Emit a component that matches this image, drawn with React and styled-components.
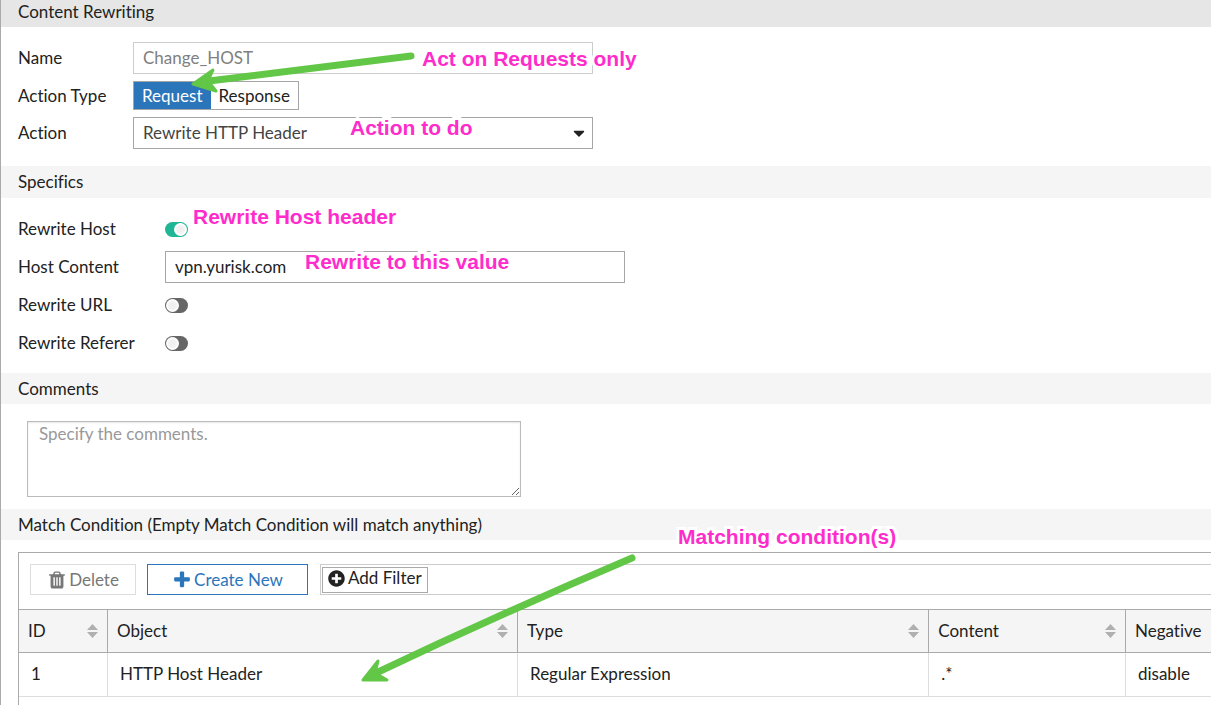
import React, { useState } from 'react';
import styled, { createGlobalStyle } from 'styled-components';
import { FaCaretDown, FaPlusCircle } from 'react-icons/fa';

const GlobalStyle = createGlobalStyle`
  *, *::before, *::after {
    box-sizing: border-box;
  }

  body {
    margin: 0;
    background: #fff;
    color: #222;
    font-family: Lato, "Liberation Sans", sans-serif;
    font-size: 17px;
    font-variant-ligatures: none;
    line-height: 24px;
  }

  button, input, select, textarea {
    font: inherit;
    color: inherit;
    border-radius: 0;
  }
`;

const Page = styled.main`
  position: relative;
  display: flex;
  flex-direction: column;
  min-height: 100vh;
  border-left: 1px solid #aaa;
  overflow: hidden;
`;

const PageTitle = styled.h1`
  margin: 0;
  padding: 0 17px 3px;
  background: #e6e6e6;
  font-size: 17px;
  font-weight: 400;
`;

const SectionTitle = styled.h2`
  display: flex;
  align-items: center;
  margin: 0;
  padding: 0 17px;
  height: ${(props) => props.$height || 31}px;
  background: #f5f5f5;
  font-size: 17px;
  font-weight: 400;
`;

const GeneralForm = styled.div`
  display: flex;
  flex-direction: column;
  gap: 7px;
  padding: 15px 17px 17px;
`;

const SpecificsForm = styled.div`
  display: flex;
  flex-direction: column;
  padding: 12px 17px 11px;
`;

const Row = styled.div`
  display: flex;
  align-items: center;
  min-height: ${(props) => props.$height || 0}px;
`;

const Label = styled.label`
  flex: none;
  width: ${(props) => (props.$wide ? 147 : 115)}px;
`;

const Field = styled.div`
  position: relative;
  flex: 0 1 460px;
`;

const TextInput = styled.input`
  display: block;
  width: 100%;
  height: 32px;
  padding: 0 9px 2px;
  border: 1px solid #a6a6a6;
  background: #fff;
  outline: none;

  &:disabled {
    border-color: #ccc;
    color: #808080;
  }
`;

const Select = styled.select`
  display: block;
  width: 100%;
  height: 32px;
  padding: 0 9px;
  border: 1px solid #a6a6a6;
  background: #fff;
  color: #444;
  appearance: none;
  outline: none;
`;

const SelectArrow = styled(FaCaretDown)`
  position: absolute;
  top: 7px;
  right: 5px;
  color: #222;
  font-size: 18px;
  pointer-events: none;
`;

const Segmented = styled.div`
  display: flex;
  border: 1px solid #a6a6a6;
`;

const Segment = styled.button`
  height: 27px;
  padding: 0 8px;
  border: 0;
  background: ${(props) => (props.$active ? '#2b75bb' : '#fff')};
  color: ${(props) => (props.$active ? '#fff' : '#222')};
  cursor: pointer;
`;

const Toggle = styled.input`
  appearance: none;
  display: block;
  width: 23px;
  height: 15px;
  margin: 0;
  border-radius: 8px;
  background: #666;
  cursor: pointer;

  &::before {
    content: '';
    display: block;
    width: 13px;
    height: 13px;
    margin: 1px;
    border-radius: 50%;
    background: radial-gradient(circle, #eee 0, #f2f2f2 40%, #fff 60%);
  }

  &:checked {
    background: #1fb695;
  }

  &:checked::before {
    margin-left: 9px;
  }
`;

const CommentsForm = styled.div`
  padding: 17px 26px 12px;
`;

const Comments = styled.textarea`
  display: block;
  width: 494px;
  max-width: 100%;
  height: 76px;
  padding: 0 11px;
  border: 1px solid #bbb;
  box-shadow: inset 0 1px 2px #e6e6e6;
  outline: none;

  &::placeholder {
    color: #999;
  }
`;

const Panel = styled.section`
  flex: 1;
  margin: 12px 0 0 17px;
  border: solid #aaa;
  border-width: 1px 0 0 1px;
`;

const Toolbar = styled.div`
  display: flex;
  padding: 11px 0 14px 11px;
`;

const ToolButton = styled.button`
  display: flex;
  align-items: center;
  justify-content: center;
  gap: 2px;
  width: ${(props) => props.$width}px;
  height: 31px;
  margin-right: ${(props) => props.$gap}px;
  padding: 0;
  border: 1px solid ${(props) => (props.$primary ? '#2b75bb' : '#ddd')};
  background: #fff;
  color: ${(props) => (props.$primary ? '#2b75bb' : '#777')};
`;

const FilterBar = styled.div`
  flex: 1;
  height: 31px;
  padding: 2px 1px;
  border: 1px solid #ccc;
  border-right: 0;
`;

const FilterButton = styled.button`
  display: flex;
  align-items: center;
  gap: 3px;
  height: 26px;
  padding: 0 5px 4px;
  border: 1px solid #aaa;
  background: #fff;
`;

const Table = styled.table`
  width: 100%;
  border-spacing: 0;
  table-layout: fixed;
`;

const HeadCell = styled.th`
  width: ${(props) => props.$width};
  height: 44px;
  padding: 0 9px;
  border: solid #aaa;
  border-width: 1px 0 1px 1px;
  background: #f5f5f5;
  font-weight: 400;
  text-align: left;

  &:first-child {
    border-left: 0;
  }
`;

const HeadContent = styled.div`
  display: flex;
  align-items: center;
  justify-content: space-between;
`;

const Cell = styled.td`
  height: 44px;
  padding: 0 12px 2px;
  border: solid #ddd;
  border-width: 0 0 1px 1px;

  &:first-child {
    border-left: 0;
  }
`;

const Note = styled.span`
  position: absolute;
  left: ${(props) => props.$left}px;
  top: ${(props) => props.$top}px;
  color: #ff2ccb;
  font-family: "Liberation Sans", Arial, sans-serif;
  font-size: 21px;
  font-weight: 700;
  white-space: nowrap;
  -webkit-text-stroke: 6px #fff;
  paint-order: stroke fill;
  stroke-linejoin: round;
  pointer-events: none;
  z-index: 2;
`;

const Arrows = styled.svg`
  position: absolute;
  top: 0;
  left: -1px;
  pointer-events: none;
  z-index: 1;
`;

const TrashIcon = () => (
  <svg width="20" height="20" viewBox="0 0 1792 1792" fill="currentColor" aria-hidden="true">
    <path d="M704 1376v-704q0-14-9-23t-23-9h-64q-14 0-23 9t-9 23v704q0 14 9 23t23 9h64q14 0 23-9t9-23zm256 0v-704q0-14-9-23t-23-9h-64q-14 0-23 9t-9 23v704q0 14 9 23t23 9h64q14 0 23-9t9-23zm256 0v-704q0-14-9-23t-23-9h-64q-14 0-23 9t-9 23v704q0 14 9 23t23 9h64q14 0 23-9t9-23zm-544-992h448l-48-117q-7-9-17-11h-317q-10 2-17 11zm928 32v64q0 14-9 23t-23 9h-96v948q0 83-47 143.5t-113 60.5h-832q-66 0-113-58.5t-47-141.5v-952h-96q-14 0-23-9t-9-23v-64q0-14 9-23t23-9h309l70-167q15-37 54-63t79-26h320q40 0 79 26t54 63l70 167h309q14 0 23 9t9 23z" />
  </svg>
);

const PlusIcon = () => (
  <svg width="20" height="20" viewBox="0 0 1792 1792" fill="currentColor" aria-hidden="true">
    <path d="M1600 736v192q0 40-28 68t-68 28h-416v416q0 40-28 68t-68 28h-192q-40 0-68-28t-28-68v-416h-416q-40 0-68-28t-28-68v-192q0-40 28-68t68-28h416v-416q0-40 28-68t68-28h192q40 0 68 28t28 68v416h416q40 0 68 28t28 68z" />
  </svg>
);

const SortIcon = () => (
  <svg width="11" height="14" viewBox="0 0 11 14" fill="#b0b0b0" aria-hidden="true">
    <path d="M5.5 0L11 6H0zM0 8h11l-5.5 6z" />
  </svg>
);

const columns = [
  { name: 'ID', width: '88px', sortable: true },
  { name: 'Object', width: '34.4%', sortable: true },
  { name: 'Type', width: '34.5%', sortable: true },
  { name: 'Content', width: '16.5%', sortable: true },
  { name: 'Negative', width: 'auto', sortable: false },
];

const conditions = [['1', 'HTTP Host Header', 'Regular Expression', '.*', 'disable']];

const App = () => {
  const [actionType, setActionType] = useState('Request');

  return (
    <>
      <GlobalStyle />
      <Page>
        <PageTitle>Content Rewriting</PageTitle>
        <GeneralForm>
          <Row>
            <Label htmlFor="name">Name</Label>
            <Field>
              <TextInput id="name" defaultValue="Change_HOST" disabled />
              <Note $left={289} $top={5}>Act on Requests only</Note>
            </Field>
          </Row>
          <Row>
            <Label as="span" id="action-type">Action Type</Label>
            <Segmented role="group" aria-labelledby="action-type">
              {['Request', 'Response'].map((type) => (
                <Segment
                  key={type}
                  type="button"
                  $active={actionType === type}
                  aria-pressed={actionType === type}
                  onClick={() => setActionType(type)}
                >
                  {type}
                </Segment>
              ))}
            </Segmented>
          </Row>
          <Row>
            <Label htmlFor="action">Action</Label>
            <Field>
              <Select id="action">
                <option>Rewrite HTTP Header</option>
              </Select>
              <SelectArrow />
              <Note $left={217} $top={-1}>Action to do</Note>
            </Field>
          </Row>
        </GeneralForm>

        <SectionTitle $height={32}>Specifics</SectionTitle>
        <SpecificsForm>
          <Row $height={38}>
            <Label $wide htmlFor="rewrite-host">Rewrite Host</Label>
            <Field>
              <Toggle type="checkbox" id="rewrite-host" defaultChecked />
              <Note $left={28} $top={-17}>Rewrite Host header</Note>
            </Field>
          </Row>
          <Row $height={38}>
            <Label $wide htmlFor="host-content">Host Content</Label>
            <Field>
              <TextInput id="host-content" defaultValue="vpn.yurisk.com" />
              <Note $left={140} $top={-1}>Rewrite to this value</Note>
            </Field>
          </Row>
          <Row $height={38}>
            <Label $wide htmlFor="rewrite-url">Rewrite URL</Label>
            <Toggle type="checkbox" id="rewrite-url" />
          </Row>
          <Row $height={38}>
            <Label $wide htmlFor="rewrite-referer">Rewrite Referer</Label>
            <Toggle type="checkbox" id="rewrite-referer" />
          </Row>
        </SpecificsForm>

        <SectionTitle>Comments</SectionTitle>
        <CommentsForm>
          <Comments aria-label="Comments" placeholder="Specify the comments." />
        </CommentsForm>

        <SectionTitle>Match Condition (Empty Match Condition will match anything)</SectionTitle>
        <Panel>
          <Toolbar>
            <ToolButton type="button" $width={106} $gap={11}>
              <TrashIcon />
              Delete
            </ToolButton>
            <ToolButton type="button" $primary $width={161} $gap={12}>
              <PlusIcon />
              Create New
            </ToolButton>
            <FilterBar>
              <FilterButton type="button">
                <FaPlusCircle size={17} />
                Add Filter
              </FilterButton>
            </FilterBar>
          </Toolbar>
          <Table>
            <thead>
              <tr>
                {columns.map((column) => (
                  <HeadCell key={column.name} $width={column.width}>
                    <HeadContent>
                      {column.name}
                      {column.sortable && <SortIcon />}
                    </HeadContent>
                  </HeadCell>
                ))}
              </tr>
            </thead>
            <tbody>
              {conditions.map((condition) => (
                <tr key={condition[0]}>
                  {condition.map((value, index) => (
                    <Cell key={columns[index].name}>{value}</Cell>
                  ))}
                </tr>
              ))}
            </tbody>
          </Table>
        </Panel>

        <Note $left={677} $top={525}>Matching condition(s)</Note>
        <Arrows width="700" height="700" viewBox="0 0 700 700" fill="#62c646" stroke="#62c646" strokeLinejoin="round" strokeLinecap="round" aria-hidden="true">
          <path d="M411 56L209 81" fill="none" strokeWidth="7" />
          <path d="M193 84L213 70L208 81L216 91Z" strokeWidth="3" />
          <path d="M632 558Q500 614 376 673" fill="none" strokeWidth="7" />
          <path d="M363 680L378 661L375 673L387 680Z" strokeWidth="3" />
        </Arrows>
      </Page>
    </>
  );
};

export default App;
